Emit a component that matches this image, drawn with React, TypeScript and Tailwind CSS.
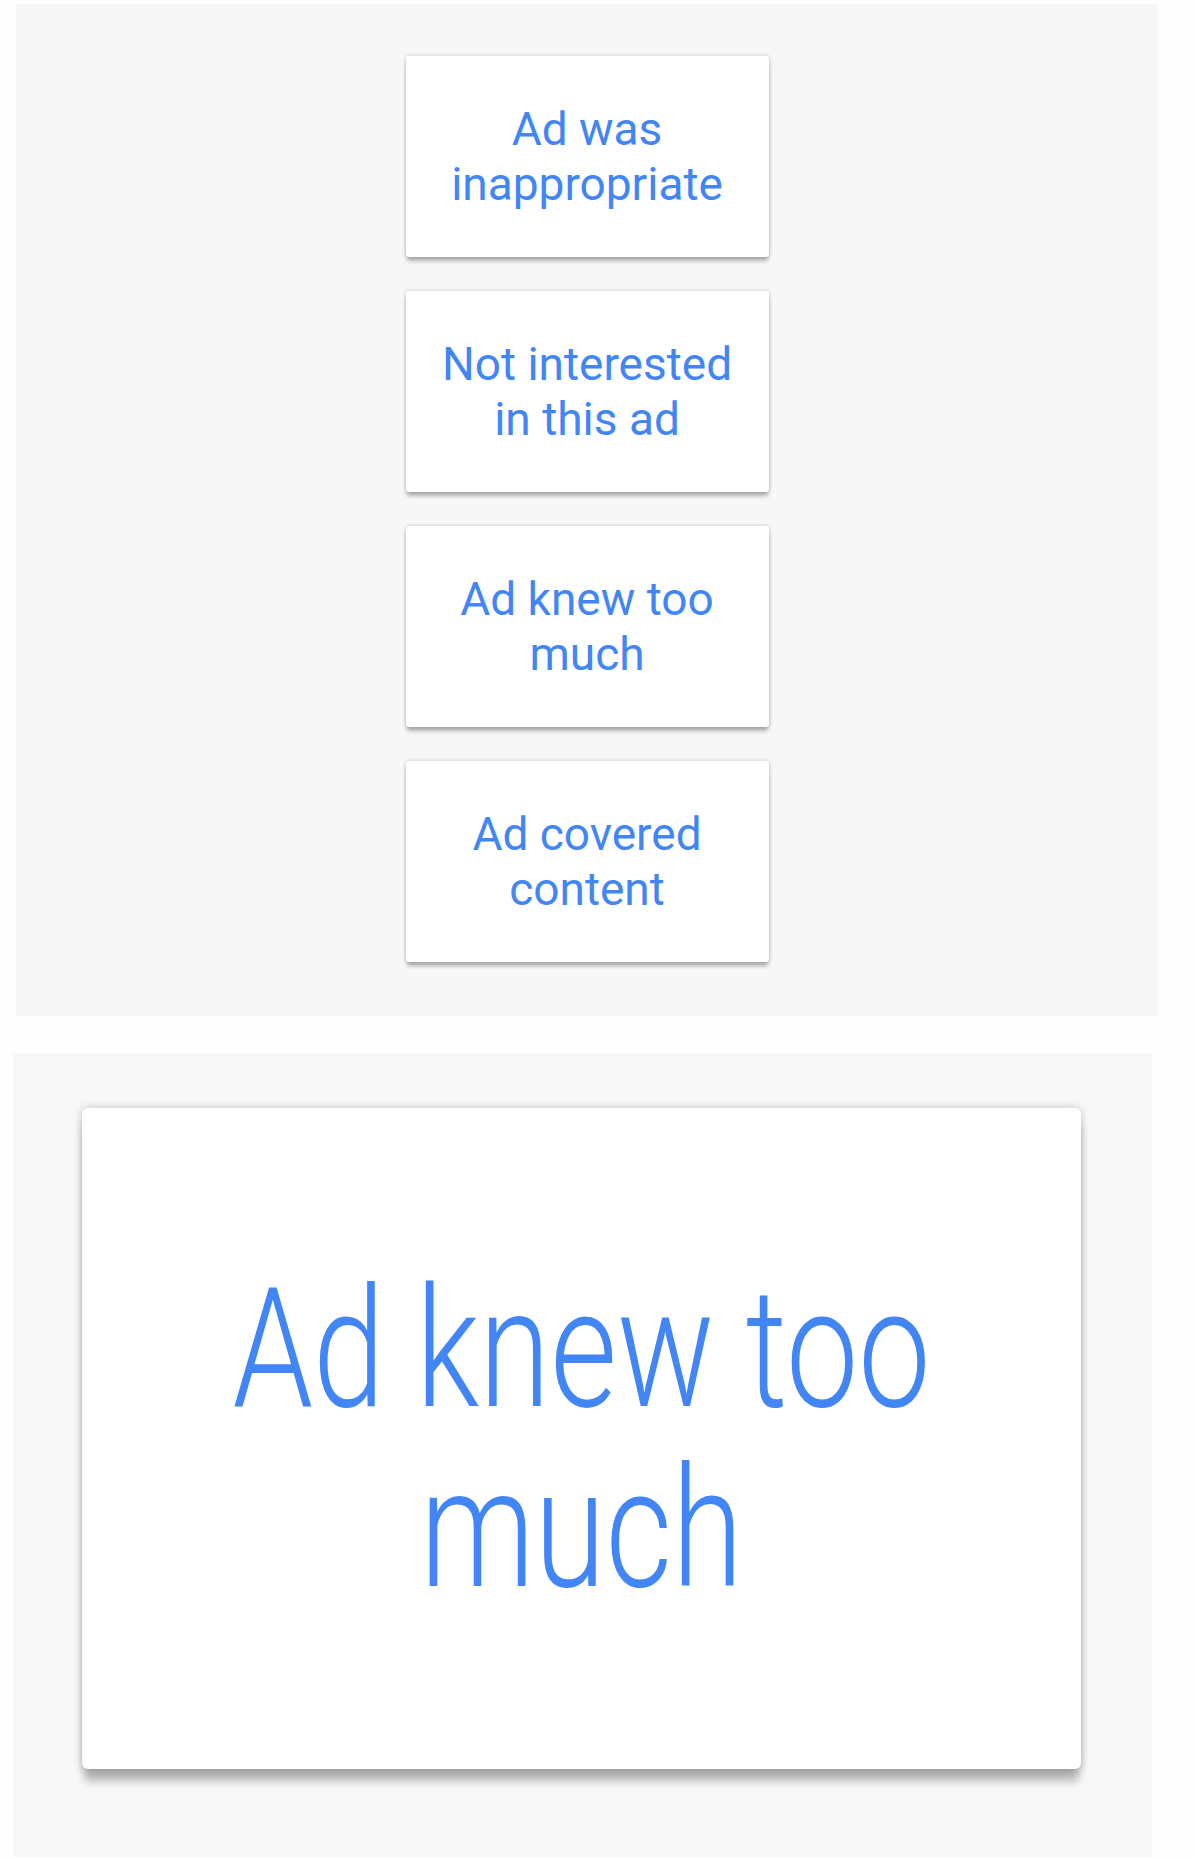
import React from 'react';

const reasons = ['Ad was inappropriate', 'Not interested in this ad', 'Ad knew too much', 'Ad covered content'];

const ReasonCard: React.FC<{ label: string }> = ({ label }) => (
  <button className="flex h-[201px] w-[363px] items-center justify-center rounded-[3px] bg-white px-[24px] text-center shadow-[0_0_4px_rgba(0,0,0,0.2),0_5px_4px_-1px_rgba(0,0,0,0.28)]">
    <span className="font-[Roboto,sans-serif] text-[46px] leading-[55px] text-[#4285f4]">{label}</span>
  </button>
);

const App: React.FC = () => {
  return (
    <div className="min-h-[1860px] bg-[#fefefe] pt-[4px]">
      {/* list of feedback options */}
      <div className="ml-[16px] flex h-[1012px] w-[1142px] flex-col items-center gap-[34px] bg-[#f7f7f8] pt-[52px]">
        {reasons.map((reason) => (
          <ReasonCard key={reason} label={reason} />
        ))}
      </div>

      {/* close-up of a single option */}
      <div className="ml-[13px] mt-[37px] h-[804px] w-[1139px] bg-[#f8f8f8] pl-[69px] pt-[55px]">
        <div className="flex h-[661px] w-[999px] items-center justify-center rounded-[6px] bg-white px-[48px] text-center shadow-[0_0_10px_rgba(0,0,0,0.22),0_14px_10px_-2px_rgba(0,0,0,0.28)]">
          <span className="inline-block scale-y-[1.3] font-[Roboto,sans-serif] text-[129px] font-light leading-[138px] text-[#4285f4]">
            Ad knew too much
          </span>
        </div>
      </div>
    </div>
  );
};

export default App;
